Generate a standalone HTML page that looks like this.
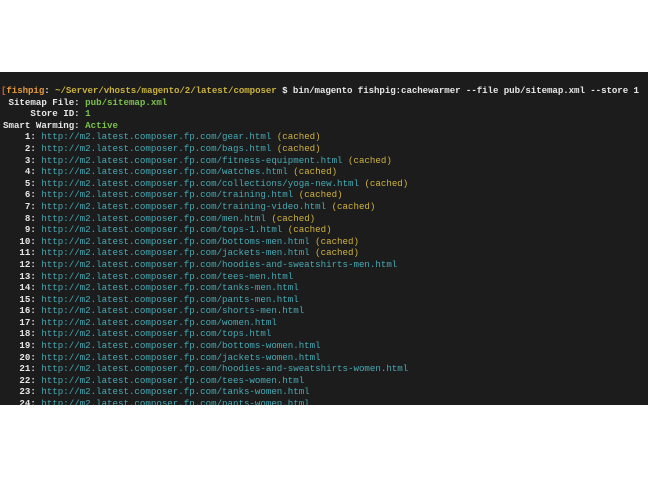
<!DOCTYPE html>
<html><head><style>
html,body{margin:0;padding:0;background:#fff;width:648px;height:477px;overflow:hidden}
#t{position:absolute;left:0;top:72px;width:648px;height:333px;background:#1c1c1c;overflow:hidden}
pre{margin:0;position:absolute;left:3px;top:13px;font-family:"Liberation Mono",monospace;font-size:9.15px;line-height:11.6px;color:#e6e6e6;font-weight:bold;white-space:pre}
.f{letter-spacing:-0.07px;margin-left:-2px}
.o{color:#e59a3a}.y{color:#c9b23c}.g{color:#7cc04a}.c{color:#47aab5;font-weight:normal}.k{color:#cfb33e;font-weight:normal}.r{color:#d0603a}
</style></head><body><div id="t"><pre><span class="f"><span class="r">[</span><span class="o">fishpig</span>: <span class="y">~/Server/vhosts/magento/2/latest/composer</span> $ bin/magento fishpig:cachewarmer --file pub/sitemap.xml --store 1</span>
 Sitemap File: <span class="g">pub/sitemap.xml</span>
     Store ID: <span class="g">1</span>
Smart Warming: <span class="g">Active</span>
    1: <span class="c">http://m2.latest.composer.fp.com/gear.html</span> <span class="k">(cached)</span>
    2: <span class="c">http://m2.latest.composer.fp.com/bags.html</span> <span class="k">(cached)</span>
    3: <span class="c">http://m2.latest.composer.fp.com/fitness-equipment.html</span> <span class="k">(cached)</span>
    4: <span class="c">http://m2.latest.composer.fp.com/watches.html</span> <span class="k">(cached)</span>
    5: <span class="c">http://m2.latest.composer.fp.com/collections/yoga-new.html</span> <span class="k">(cached)</span>
    6: <span class="c">http://m2.latest.composer.fp.com/training.html</span> <span class="k">(cached)</span>
    7: <span class="c">http://m2.latest.composer.fp.com/training-video.html</span> <span class="k">(cached)</span>
    8: <span class="c">http://m2.latest.composer.fp.com/men.html</span> <span class="k">(cached)</span>
    9: <span class="c">http://m2.latest.composer.fp.com/tops-1.html</span> <span class="k">(cached)</span>
   10: <span class="c">http://m2.latest.composer.fp.com/bottoms-men.html</span> <span class="k">(cached)</span>
   11: <span class="c">http://m2.latest.composer.fp.com/jackets-men.html</span> <span class="k">(cached)</span>
   12: <span class="c">http://m2.latest.composer.fp.com/hoodies-and-sweatshirts-men.html</span>
   13: <span class="c">http://m2.latest.composer.fp.com/tees-men.html</span>
   14: <span class="c">http://m2.latest.composer.fp.com/tanks-men.html</span>
   15: <span class="c">http://m2.latest.composer.fp.com/pants-men.html</span>
   16: <span class="c">http://m2.latest.composer.fp.com/shorts-men.html</span>
   17: <span class="c">http://m2.latest.composer.fp.com/women.html</span>
   18: <span class="c">http://m2.latest.composer.fp.com/tops.html</span>
   19: <span class="c">http://m2.latest.composer.fp.com/bottoms-women.html</span>
   20: <span class="c">http://m2.latest.composer.fp.com/jackets-women.html</span>
   21: <span class="c">http://m2.latest.composer.fp.com/hoodies-and-sweatshirts-women.html</span>
   22: <span class="c">http://m2.latest.composer.fp.com/tees-women.html</span>
   23: <span class="c">http://m2.latest.composer.fp.com/tanks-women.html</span>
   24: <span class="c">http://m2.latest.composer.fp.com/pants-women.html</span></pre></div></body></html>
